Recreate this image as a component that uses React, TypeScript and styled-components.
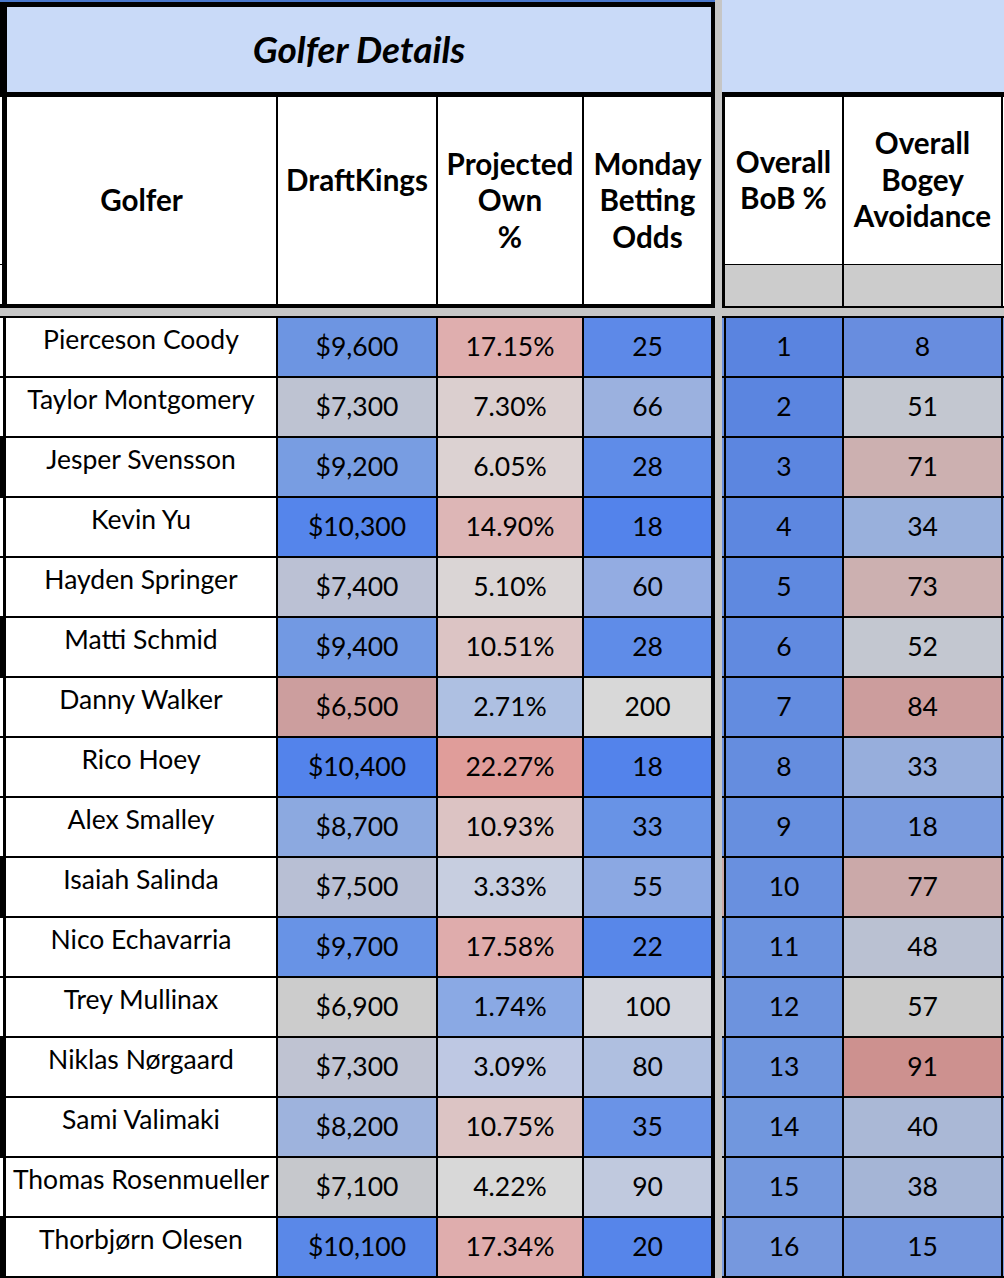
import React from "react";
import styled, { createGlobalStyle } from "styled-components";

const GlobalStyle = createGlobalStyle`
  html, body {
    margin: 0;
    padding: 0;
    background: #ffffff;
  }
  body {
    font-family: "Lato", "Liberation Sans", sans-serif;
    color: #000000;
  }
`;

type Cell = [string, string];

type Golfer = {
  name: string;
  edge: string;
  dk: Cell;
  own: Cell;
  odds: Cell;
  bob: Cell;
  bogey: Cell;
  rightEdge: string;
};

const golfers: Golfer[] = [
  { name: "Pierceson Coody", edge: "#ffffff", dk: ["$9,600", "#6d95e2"], own: ["17.15%", "#dfaeae"], odds: ["25", "#5d89e8"], bob: ["1", "#5a84e0"], bogey: ["8", "#688ddf"], rightEdge: "#6a90df" },
  { name: "Taylor Montgomery", edge: "#ffffff", dk: ["$7,300", "#bec3d2"], own: ["7.30%", "#dbcfcf"], odds: ["66", "#9bb1df"], bob: ["2", "#5b85e0"], bogey: ["51", "#c3c7d0"], rightEdge: "#6a90df" },
  { name: "Jesper Svensson", edge: "#000000", dk: ["$9,200", "#789de2"], own: ["6.05%", "#dcd2d2"], odds: ["28", "#5f8ce8"], bob: ["3", "#5c86e0"], bogey: ["71", "#ccb0b0"], rightEdge: "#6a90df" },
  { name: "Kevin Yu", edge: "#ffffff", dk: ["$10,300", "#5585eb"], own: ["14.90%", "#ddb6b6"], odds: ["18", "#5383eb"], bob: ["4", "#5d87e0"], bogey: ["34", "#99b0dc"], rightEdge: "#6a90df" },
  { name: "Hayden Springer", edge: "#ffffff", dk: ["$7,400", "#bbc1d4"], own: ["5.10%", "#dad5d5"], odds: ["60", "#93ace2"], bob: ["5", "#5f89e0"], bogey: ["73", "#ccb0b0"], rightEdge: "#6a90df" },
  { name: "Matti Schmid", edge: "#000000", dk: ["$9,400", "#7299e3"], own: ["10.51%", "#dcc4c4"], odds: ["28", "#5f8ce8"], bob: ["6", "#618ae0"], bogey: ["52", "#c3c7d0"], rightEdge: "#6a90df" },
  { name: "Danny Walker", edge: "#ffffff", dk: ["$6,500", "#cc9e9e"], own: ["2.71%", "#aec0e2"], odds: ["200", "#d8d8d8"], bob: ["7", "#638ce0"], bogey: ["84", "#cc9d9d"], rightEdge: "#6a90df" },
  { name: "Rico Hoey", edge: "#ffffff", dk: ["$10,400", "#5383eb"], own: ["22.27%", "#e09d9a"], odds: ["18", "#5383eb"], bob: ["8", "#658ddf"], bogey: ["33", "#97aedc"], rightEdge: "#6a90df" },
  { name: "Alex Smalley", edge: "#ffffff", dk: ["$8,700", "#8ca9e0"], own: ["10.93%", "#dcc3c3"], odds: ["33", "#6893e6"], bob: ["9", "#678fdf"], bogey: ["18", "#7a9bde"], rightEdge: "#6a90df" },
  { name: "Isaiah Salinda", edge: "#000000", dk: ["$7,500", "#b8bfd4"], own: ["3.33%", "#c7cee0"], odds: ["55", "#8ba8e3"], bob: ["10", "#6990df"], bogey: ["77", "#cba9a9"], rightEdge: "#cba9a9" },
  { name: "Nico Echavarria", edge: "#ffffff", dk: ["$9,700", "#6893e6"], own: ["17.58%", "#dfacac"], odds: ["22", "#5887e9"], bob: ["11", "#6b92df"], bogey: ["48", "#bac1d2"], rightEdge: "#6a90df" },
  { name: "Trey Mullinax", edge: "#ffffff", dk: ["$6,900", "#cccccc"], own: ["1.74%", "#8aa9e4"], odds: ["100", "#d2d4dc"], bob: ["12", "#6d93de"], bogey: ["57", "#cacaca"], rightEdge: "#c8c8c8" },
  { name: "Niklas Nørgaard", edge: "#000000", dk: ["$7,300", "#bfc3d2"], own: ["3.09%", "#bec8e3"], odds: ["80", "#afbfe0"], bob: ["13", "#6f95de"], bogey: ["91", "#cd918f"], rightEdge: "#6a90df" },
  { name: "Sami Valimaki", edge: "#000000", dk: ["$8,200", "#9eb3dd"], own: ["10.75%", "#dcc4c4"], odds: ["35", "#6a93e7"], bob: ["14", "#7197de"], bogey: ["40", "#aab8d6"], rightEdge: "#b4bed6" },
  { name: "Thomas Rosenmueller", edge: "#ffffff", dk: ["$7,100", "#c6c8cc"], own: ["4.22%", "#d8d8d8"], odds: ["90", "#c0c9de"], bob: ["15", "#7498de"], bogey: ["38", "#a5b5d6"], rightEdge: "#c8c8c8" },
  { name: "Thorbjørn Olesen", edge: "#000000", dk: ["$10,100", "#5a88e8"], own: ["17.34%", "#dfadad"], odds: ["20", "#5685ea"], bob: ["16", "#7698de"], bogey: ["15", "#7597de"], rightEdge: "#7a9bde" },
];

const Sheet = styled.div`
  display: flex;
  gap: 7px;
  width: 1004px;
  height: 1278px;
  background: #c6c6c6;
  overflow: hidden;
`;

const Pane = styled.div<{ $width: number }>`
  width: ${(p) => p.$width}px;
  flex-shrink: 0;
  display: flex;
  flex-direction: column;
`;

const TopStripe = styled.div`
  height: 2px;
  background: #4a78cc;
`;

const TitleBox = styled.div`
  height: 95px;
  box-sizing: border-box;
  border-style: solid;
  border-color: #000000;
  border-width: 5px 4px 5px 7px;
  background: #c9daf8;
  display: flex;
  align-items: center;
  justify-content: center;
  font-size: 37px;
  font-weight: 700;
  font-style: italic;
  padding-bottom: 2px;
`;

const BlankTitle = styled.div`
  height: 97px;
  box-sizing: border-box;
  border-bottom: 5px solid #000000;
  background: #c9daf8;
`;

const HeaderRow = styled.div`
  height: 212px;
  box-sizing: border-box;
  display: flex;
  border-bottom: 4px solid #000000;
  background: #ffffff;
`;

const HeaderEdge = styled.div`
  width: 2px;
  background: linear-gradient(#ffffff 0 167px, #000000 167px 168px, #ffffff 168px);
`;

const HeaderCells = styled.div`
  display: flex;
  border-left: 5px solid #000000;
  border-right: 4px solid #000000;
`;

const HeaderCell = styled.div<{ $width: number; $last?: boolean; $lift?: number }>`
  width: ${(p) => p.$width}px;
  box-sizing: content-box;
  border-right: ${(p) => (p.$last ? "none" : "2px solid #000000")};
  display: flex;
  align-items: center;
  justify-content: center;
  text-align: center;
  padding-bottom: ${(p) => p.$lift ?? 0}px;
  font-size: 29.6px;
  font-weight: 700;
  line-height: 36.5px;
`;

const RightHeader = styled.div`
  height: 212px;
  box-sizing: border-box;
  display: flex;
  border-bottom: 2px solid #000000;
  border-left: 3px solid #000000;
`;

const RightHeaderCol = styled.div<{ $width: number }>`
  width: ${(p) => p.$width}px;
  border-right: 2px solid #000000;
  display: flex;
  flex-direction: column;
`;

const RightHeaderTitle = styled.div`
  height: 167px;
  border-bottom: 1px solid #000000;
  background: #ffffff;
  display: flex;
  align-items: center;
  justify-content: center;
  text-align: center;
  font-size: 29.6px;
  font-weight: 700;
  line-height: 36.5px;
`;

const RightHeaderFill = styled.div`
  flex: 1;
  background: #cccccc;
`;

const RightEdge = styled.div<{ $color: string }>`
  width: 1px;
  background: ${(p) => p.$color};
`;

const Spacer = styled.div`
  height: 8px;
`;

const Rows = styled.div`
  border-top: 2px solid #000000;
`;

const DataRow = styled.div`
  height: 60px;
  box-sizing: border-box;
  display: flex;
  border-bottom: 2px solid #000000;
`;

const Edge = styled.div<{ $width: number; $color: string }>`
  width: ${(p) => p.$width}px;
  flex-shrink: 0;
  background: ${(p) => p.$color};
`;

const RowCells = styled.div<{ $left: number; $right: number }>`
  display: flex;
  border-left: ${(p) => p.$left}px solid #000000;
  border-right: ${(p) => p.$right}px solid #000000;
`;

const DataCell = styled.div<{ $width: number; $bg: string; $last?: boolean }>`
  width: ${(p) => p.$width}px;
  flex-shrink: 0;
  background: ${(p) => p.$bg};
  border-right: ${(p) => (p.$last ? "none" : "2px solid #000000")};
  display: flex;
  align-items: center;
  justify-content: center;
  font-size: 26.5px;
  white-space: nowrap;
  padding-bottom: 3px;
  box-sizing: border-box;
`;

const NameCell = styled(DataCell)`
  padding-bottom: 17px;
  width: ${(p) => p.$width + 2}px;
`;

export default function App() {
  return (
    <>
      <GlobalStyle />
      <Sheet>
        <Pane $width={715}>
          <TopStripe />
          <TitleBox>Golfer Details</TitleBox>
          <HeaderRow>
            <HeaderEdge />
            <HeaderCells>
              <HeaderCell $width={269}>Golfer</HeaderCell>
              <HeaderCell $width={158} $lift={41}>
                DraftKings
              </HeaderCell>
              <HeaderCell $width={144}>
                Projected
                <br />
                Own
                <br />%
              </HeaderCell>
              <HeaderCell $width={127} $last>
                Monday
                <br />
                Betting
                <br />
                Odds
              </HeaderCell>
            </HeaderCells>
          </HeaderRow>
          <Spacer />
          <Rows>
            {golfers.map((g) => (
              <DataRow key={g.name}>
                <Edge $width={3} $color={g.edge} />
                <RowCells $left={3} $right={4}>
                  <NameCell $width={270} $bg="#ffffff">
                    {g.name}
                  </NameCell>
                  <DataCell $width={160} $bg={g.dk[1]}>
                    {g.dk[0]}
                  </DataCell>
                  <DataCell $width={146} $bg={g.own[1]}>
                    {g.own[0]}
                  </DataCell>
                  <DataCell $width={127} $bg={g.odds[1]} $last>
                    {g.odds[0]}
                  </DataCell>
                </RowCells>
              </DataRow>
            ))}
          </Rows>
        </Pane>

        <Pane $width={282}>
          <BlankTitle />
          <RightHeader>
            <RightHeaderCol $width={117}>
              <RightHeaderTitle>
                Overall
                <br />
                BoB %
              </RightHeaderTitle>
              <RightHeaderFill />
            </RightHeaderCol>
            <RightHeaderCol $width={157}>
              <RightHeaderTitle>
                Overall
                <br />
                Bogey
                <br />
                Avoidance
              </RightHeaderTitle>
              <RightHeaderFill />
            </RightHeaderCol>
            <RightEdge $color="#ffffff" />
          </RightHeader>
          <Spacer />
          <Rows>
            {golfers.map((g) => (
              <DataRow key={g.name}>
                <Edge $width={2} $color={g.rightEdge} />
                <RowCells $left={2} $right={0}>
                  <DataCell $width={118} $bg={g.bob[1]}>
                    {g.bob[0]}
                  </DataCell>
                  <DataCell $width={159} $bg={g.bogey[1]}>
                    {g.bogey[0]}
                  </DataCell>
                </RowCells>
                <Edge $width={1} $color="#7a9bde" />
              </DataRow>
            ))}
          </Rows>
        </Pane>
      </Sheet>
    </>
  );
}
